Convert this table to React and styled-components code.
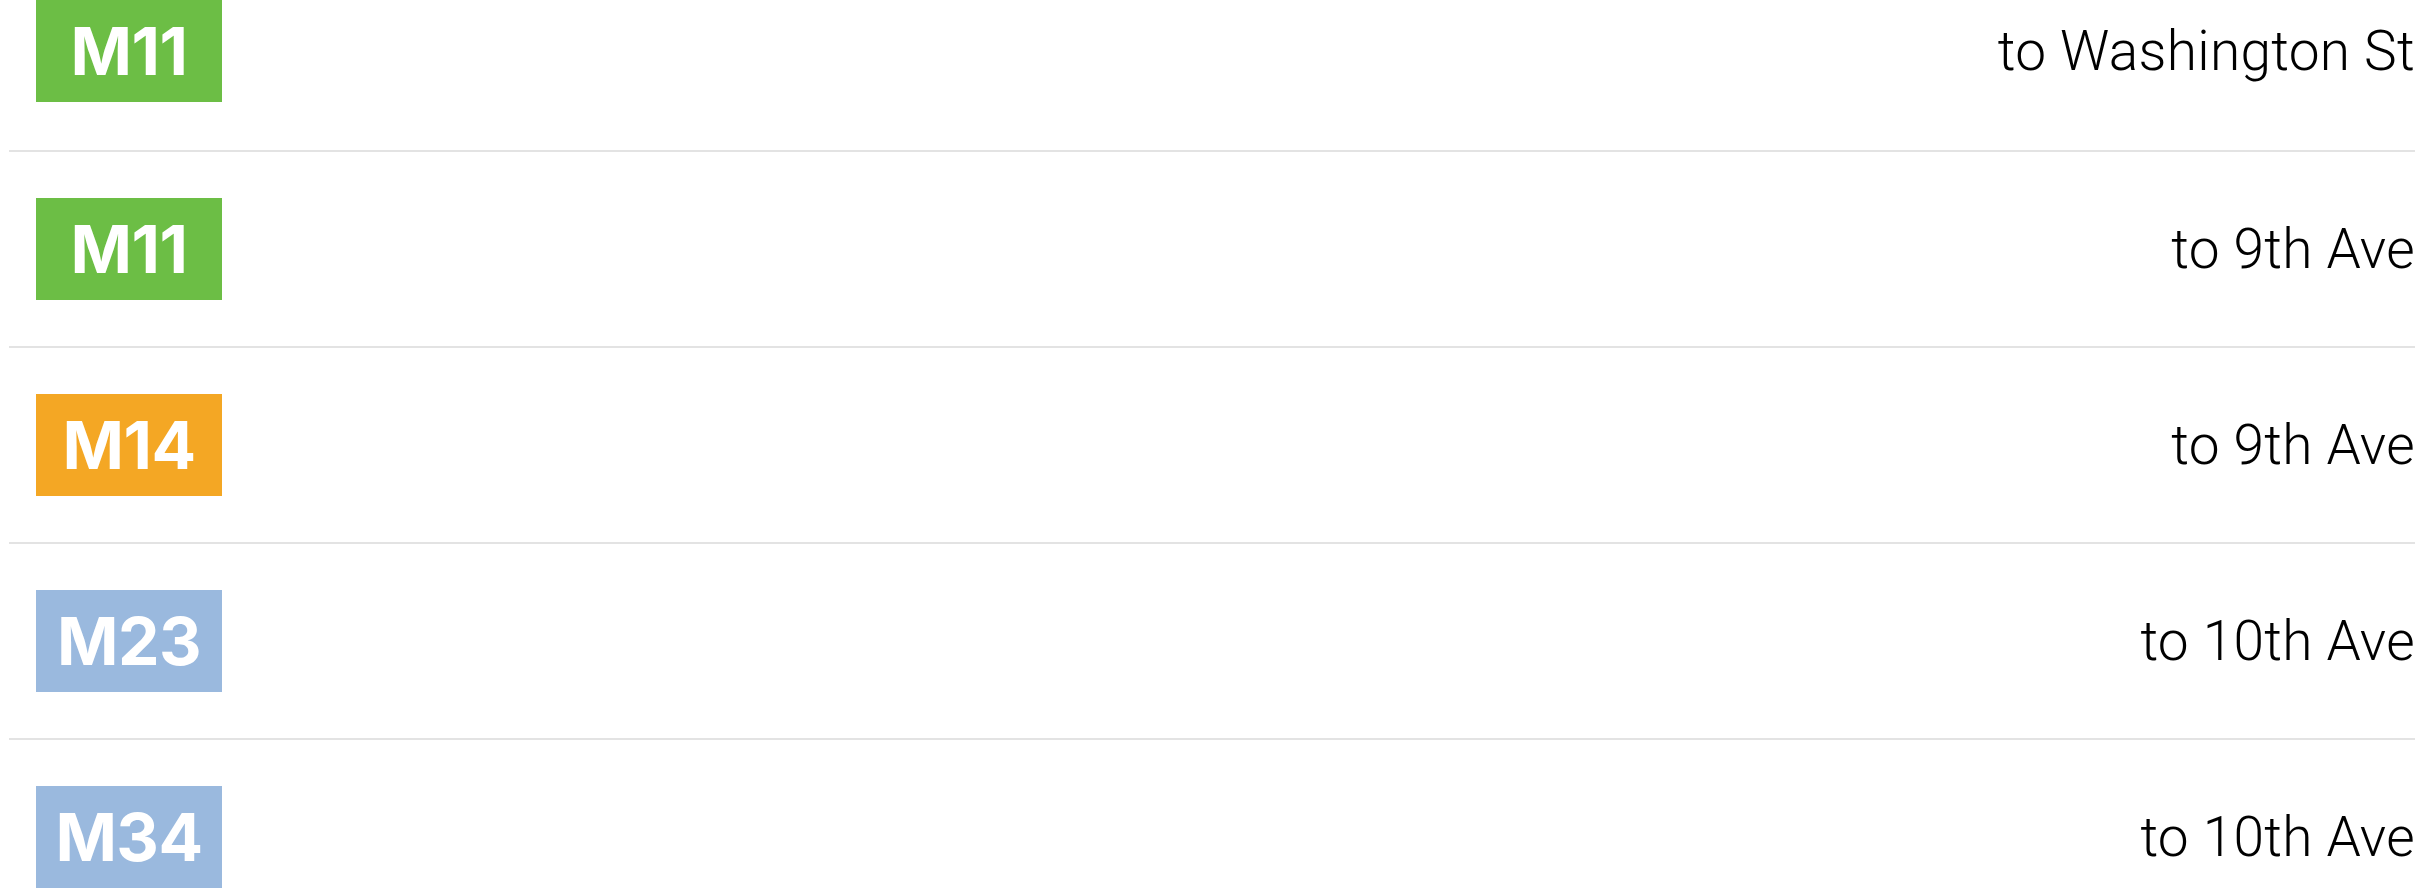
import React from "react";
import styled, { createGlobalStyle } from "styled-components";

const GlobalStyle = createGlobalStyle`
  html, body {
    margin: 0;
    padding: 0;
    background: #ffffff;
  }
  body {
    font-family: "Roboto", "Liberation Sans", sans-serif;
  }
`;

const List = styled.ul`
  list-style: none;
  margin: 0;
  padding: 0 3px 0 9px;
  display: flex;
  flex-direction: column;
`;

const Row = styled.li`
  display: flex;
  align-items: center;
  justify-content: space-between;
  padding: 46px 0 46px 27px;
  border-bottom: 2px solid #e3e3e3;

  &:first-child {
    padding-top: 0;
    padding-bottom: 48px;
  }
`;

const Badge = styled.span`
  display: flex;
  align-items: center;
  justify-content: center;
  width: 186px;
  height: 102px;
  background: ${(p) => p.$color};
  color: #ffffff;
  font-family: "Inter", "Liberation Sans", sans-serif;
  font-weight: 700;
  font-size: 66px;
  line-height: 1;
  letter-spacing: -0.5px;
`;

const Destination = styled.span`
  font-family: "Roboto", "Liberation Sans", sans-serif;
  font-weight: 300;
  font-size: 55px;
  line-height: 1;
  letter-spacing: 0.3px;
  color: #000000;
  white-space: nowrap;
`;

const COLORS = {
  green: "#6cbe45",
  orange: "#f4a724",
  blue: "#9ab9de",
};

const routes = [
  { id: 1, name: "M11", color: COLORS.green, to: "to Washington St" },
  { id: 2, name: "M11", color: COLORS.green, to: "to 9th Ave" },
  { id: 3, name: "M14", color: COLORS.orange, to: "to 9th Ave" },
  { id: 4, name: "M23", color: COLORS.blue, to: "to 10th Ave" },
  { id: 5, name: "M34", color: COLORS.blue, to: "to 10th Ave" },
];

export default function App() {
  return (
    <>
      <GlobalStyle />
      <List>
        {routes.map((r) => (
          <Row key={r.id}>
            <Badge $color={r.color}>{r.name}</Badge>
            <Destination>{r.to}</Destination>
          </Row>
        ))}
      </List>
    </>
  );
}
